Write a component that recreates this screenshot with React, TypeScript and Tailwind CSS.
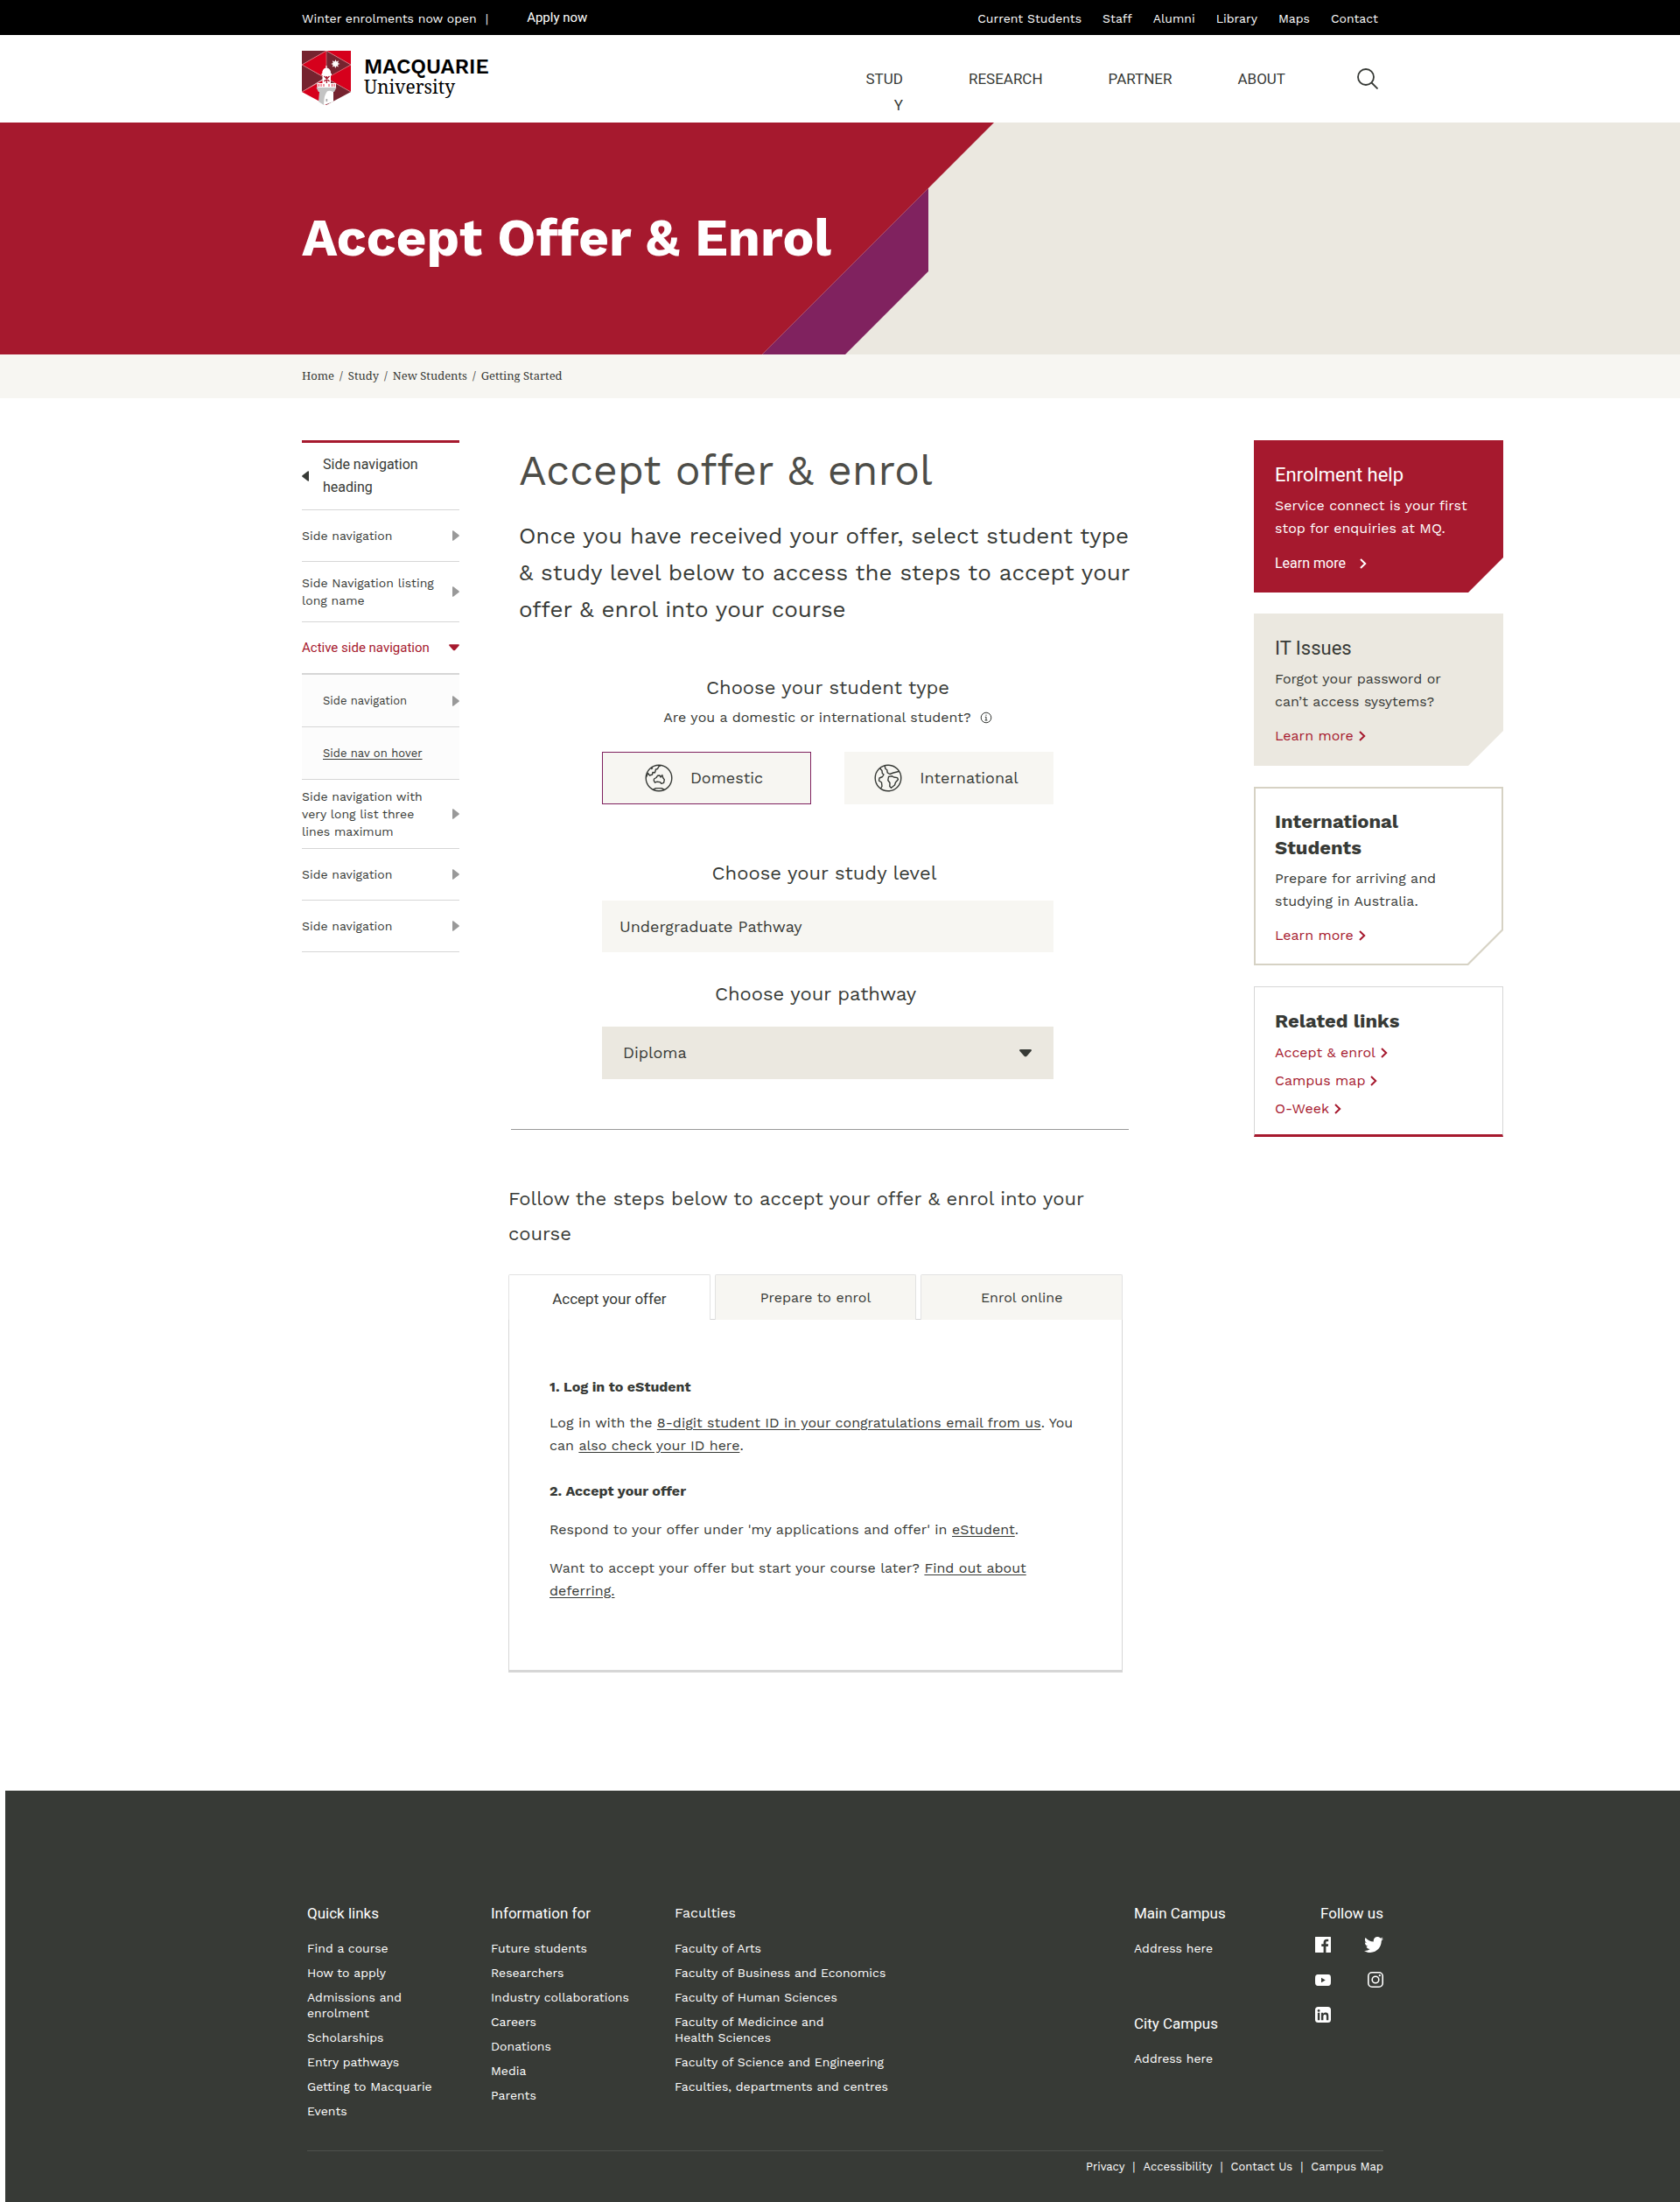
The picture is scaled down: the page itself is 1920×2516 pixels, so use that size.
import { useState, type ReactNode } from 'react'

const INK = 'text-[#373a36]'

function Crest() {
  return (
    <svg viewBox="0 0 56 62" className="h-[62px] w-14" aria-hidden="true">
      <path d="M0 0H28L0 16Z" fill="#76232f" />
      <path d="M28 0L0 16L28 32Z" fill="#d6001c" />
      <path d="M0 16L26 31L0 47Z" fill="#76232f" />
      <path d="M0 47L28 31V62Z" fill="#d6001c" />
      <path d="M28 0L56 16L28 32Z" fill="#76232f" />
      <path d="M28 0H56V16Z" fill="#d6001c" />
      <path d="M56 16V47L28 31Z" fill="#d6001c" />
      <path d="M56 47L28 31V62Z" fill="#76232f" />
      <path d="M28 0L0 16L56 47M28 0L56 16L0 47M28 0V18" fill="none" stroke="#e9a7a9" strokeWidth=".5" />
      <path d="M38.5 10L39.6 12.6L42 11.3L41.2 14L43.4 15L41 16L41.8 18.6L39.4 17.4L38.3 20L37.3 17.4L34.8 18.6L35.7 16L33.3 15L35.7 14L34.9 11.3L37.4 12.6Z" fill="#fff" />
      <path d="M27.4 17H28.6V19.6C31.6 20.2 33.2 22.6 33.2 26H34V28H22.5V26H23.2C23.2 22.6 24.6 20.2 27.4 19.6Z" fill="#fff" />
      <path d="M23.5 28H33V37H23.5Z" fill="#fff" />
      <path d="M25.5 29L31.5 35M31.5 29L25.5 35M28.4 29V31M28.4 33V37" stroke="#a6192e" strokeWidth="1.3" />
      <path d="M17.5 37H39V42H17.5Z" fill="#fff" />
      <path d="M19.5 38V41M22 38V41M25 38V41M31 38V41M34.5 38V41M37 38V41" stroke="#d6001c" strokeWidth=".8" />
      <path d="M16.5 42H39.5L37 47H36V58L25 62L19 58L20 47H19Z" fill="#c4c4c4" />
      <path d="M28 48C29 45.5 31 45 36 47V58L25 62C25.5 57 25.2 52 28 48Z" fill="#fff" />
      <path d="M27.5 55H29.2V58H27.5Z" fill="#a8a8a8" />
    </svg>
  )
}

function SearchIcon() {
  return (
    <svg viewBox="0 0 24 24" className="size-6" fill="none" stroke="#373a36" strokeWidth="1.8" aria-hidden="true">
      <circle cx="10" cy="10" r="9" />
      <path d="M16.5 16.5L23.5 23.5" />
    </svg>
  )
}

function Chevron() {
  return (
    <svg viewBox="0 0 8 12" className="h-3 w-2" fill="none" stroke="currentColor" strokeWidth="2" aria-hidden="true">
      <path d="M1 1L6.2 6L1 11" />
    </svg>
  )
}

function TriangleRight({ className = '' }: { className?: string }) {
  return (
    <svg viewBox="0 0 8 12" className={'h-3 w-2 shrink-0 ' + className} fill="currentColor" aria-hidden="true">
      <path d="M0 .8Q.1-.2 1 .3L7.5 5.2Q8.2 6 7.5 6.8L1 11.7Q.1 12.2 0 11.2Z" />
    </svg>
  )
}

function TriangleDown({ className = '' }: { className?: string }) {
  return (
    <svg viewBox="0 0 16 10" className={className} fill="currentColor" aria-hidden="true">
      <path d="M1.4 0H14.6Q16.6 .5 15.5 2L9.6 8.6Q8 10 6.4 8.6L.5 2Q-.6 .5 1.4 0Z" />
    </svg>
  )
}

function AustraliaGlobe() {
  return (
    <svg viewBox="0 0 32 32" className="size-8" fill="none" stroke="#373a36" strokeWidth="1.4" strokeLinejoin="round" aria-hidden="true">
      <circle cx="16" cy="16" r="14.8" />
      <path d="M1.5 15L3.5 10.5L5.5 13L8.5 12L9 9.5L11.5 9.8L12.5 6L14.5 5.5L16 2.6L18 1.8M7 5.5L9 4.5" />
      <path d="M10.5 17L13 15.5L14.5 13.3L17 13L18 15L19.8 12.6L20.6 15.5L22.3 17.8L21.6 21.4L19 22.4L17.3 20.6L14 20.2L11.5 21.2L10.3 19Z" />
      <path d="M9.5 29.2L12.5 27.6L19 27.6L22 29.2" />
    </svg>
  )
}

function WorldGlobe() {
  return (
    <svg viewBox="0 0 32 32" className="size-8" fill="none" stroke="#373a36" strokeWidth="1.4" strokeLinejoin="round" aria-hidden="true">
      <circle cx="16" cy="16" r="14.8" />
      <path d="M6.5 4.8L9 7.5L9.3 10.5L11 12L9.5 14.5L6 16L5.5 19L8.5 21L9 25.5L7.5 28" />
      <path d="M12 1.8L13 5.5L14.8 6.8L15.2 9.8L18 11.5L22 10L29 8.3" />
      <path d="M16.5 14.5L20.5 13.8L22.5 15L26.5 15.6L27.5 17.5L24.5 21L23.5 24L19.5 27.2L17.8 25.6L18 21.5L15.8 18.5Z" />
    </svg>
  )
}

const utilityLinks = ['Current Students', 'Staff', 'Alumni', 'Library', 'Maps', 'Contact']

function TopBar() {
  return (
    <div className="h-10 bg-black text-sm text-white">
      <div className="mx-auto flex h-full max-w-[1230px] items-center justify-between pt-0.5">
        <div className="flex items-center">
          <span>Winter enrolments now open</span>
          <span className="ml-2.5">|</span>
          <a href="#apply" className="ml-11 font-[Roboto] text-[15px]">Apply now</a>
        </div>
        <nav aria-label="Utility" className="flex gap-6">
          {utilityLinks.map((l) => (
            <a key={l} href="#top">{l}</a>
          ))}
        </nav>
      </div>
    </div>
  )
}

function Header() {
  return (
    <header className="h-[100px] bg-white">
      <div className="mx-auto flex max-w-[1230px] items-start justify-between">
        <a href="#home" className="mt-[18px] flex gap-[15px] text-black">
          <Crest />
          <span className="flex flex-col pt-1.5">
            <span className="text-2xl leading-6 font-semibold">MACQUARIE</span>
            <span className="font-['Noto_Serif','Liberation_Serif',serif] text-[21px] leading-[22px]">University</span>
          </span>
        </a>
        <div className={'mt-[35px] flex items-start gap-[82px] font-[Roboto] text-[17px] leading-[30px] ' + INK}>
          <nav aria-label="Main" className="flex items-start gap-[75px]">
            <a href="#study" className="w-12 text-right break-all">STUDY</a>
            <a href="#research">RESEARCH</a>
            <a href="#partner">PARTNER</a>
            <a href="#about">ABOUT</a>
          </nav>
          <button type="button" aria-label="Search" className="mt-[3px]">
            <SearchIcon />
          </button>
        </div>
      </div>
    </header>
  )
}

function Hero() {
  return (
    <div className="relative h-[265px] bg-[#ebe8e0]">
      <div className="absolute inset-y-0 left-0 w-[1061px] bg-[#80225f] [clip-path:polygon(100%_75px,100%_170px,966px_100%,871px_100%)]" />
      <div className="absolute inset-y-0 left-0 w-[1136px] bg-[#a6192e] [clip-path:polygon(0_0,100%_0,871px_100%,0_100%)]" />
      <div className="relative mx-auto flex h-full max-w-[1230px] items-center pb-0.5">
        <h1 className="text-[60px] leading-[72px] font-bold text-white">Accept Offer &amp; Enrol</h1>
      </div>
    </div>
  )
}

function Breadcrumbs() {
  const crumbs = ['Home', 'Study', 'New Students', 'Getting Started']
  return (
    <nav aria-label="Breadcrumb" className="bg-[#f7f6f2]">
      <ol className={"mx-auto flex h-[50px] max-w-[1230px] items-center font-['Noto_Serif','Liberation_Serif',serif] text-[13px] " + INK}>
        {crumbs.map((c, i) => (
          <li key={c} className="flex">
            {i > 0 && <span className="mx-1.5">/</span>}
            <a href="#top">{c}</a>
          </li>
        ))}
      </ol>
    </nav>
  )
}

function SideItem({ children, height }: { children: ReactNode; height: string }) {
  return (
    <li className={'flex border-b border-[#d6d6d6] ' + height}>
      <a href="#side" className="flex flex-1 items-center justify-between gap-4">
        <span>{children}</span>
        <TriangleRight className="text-[#999]" />
      </a>
    </li>
  )
}

function SideNav() {
  return (
    <nav aria-label="Section" className={'mt-12 w-[180px] shrink-0 border-t-[3px] border-[#a6192e] text-sm leading-5 ' + INK}>
      <ul>
        <li className="flex h-[77px] border-b border-[#d6d6d6]">
          <a href="#side" className="flex items-center gap-4 font-[Roboto] text-base leading-[26px]">
            <TriangleRight className="rotate-180" />
            <span className="pr-8">Side navigation heading</span>
          </a>
        </li>
        <SideItem height="h-[59px]">Side navigation</SideItem>
        <SideItem height="h-[69px]">Side Navigation listing long name</SideItem>
        <li>
          <a href="#side" aria-current="page" className="flex h-[60px] items-center justify-between border-b-2 border-[#d6d6d6] text-[#a6192e]">
            <span className="font-[Roboto] text-[15px] whitespace-nowrap">Active side navigation</span>
            <TriangleDown className="h-2 w-3 shrink-0" />
          </a>
          <ul className="bg-[#fcfcfc] text-[13px]">
            <li className="h-[60px] border-b border-[#d6d6d6] pl-6">
              <a href="#side" className="flex h-full items-center justify-between">
                Side navigation
                <TriangleRight className="text-[#999]" />
              </a>
            </li>
            <li className="h-[60px] border-b border-[#d6d6d6] pl-6">
              <a href="#side" className="flex h-full items-center underline underline-offset-2">Side nav on hover</a>
            </li>
          </ul>
        </li>
        <SideItem height="h-[79px]">Side navigation with very long list three lines maximum</SideItem>
        <SideItem height="h-[59px]">Side navigation</SideItem>
        <SideItem height="h-[59px]">Side navigation</SideItem>
      </ul>
    </nav>
  )
}

function StudentTypeButton({ label, icon, active, onClick }: { label: string; icon: ReactNode; active: boolean; onClick: () => void }) {
  return (
    <button
      type="button"
      aria-pressed={active}
      onClick={onClick}
      className={'flex h-[60px] w-[239px] items-center justify-center gap-5 border bg-[#f7f6f2] pr-1.5 text-lg ' + (active ? 'border-[#80225f]' : 'border-[#f7f6f2]')}
    >
      {icon}
      {label}
    </button>
  )
}

function OfferForm() {
  const [type, setType] = useState('Domestic')
  const heading = 'text-center text-[22px] leading-[30px]'
  return (
    <form className="mt-[54px] ml-[107px] flex max-w-[516px] flex-col">
      <h3 className={heading}>Choose your student type</h3>
      <p className="mt-1.5 flex items-center justify-center gap-2.5 leading-[26px]">
        Are you a domestic or international student?
        <svg viewBox="0 0 14 14" className="size-3.5" fill="none" stroke="currentColor" aria-hidden="true">
          <circle cx="7" cy="7" r="5.8" />
          <path d="M7 6V10M5.8 6.3H7M5.6 10H8.4M7 3.6V4.8" />
        </svg>
      </p>
      <div className="mt-[26px] flex justify-between">
        <StudentTypeButton label="Domestic" icon={<AustraliaGlobe />} active={type === 'Domestic'} onClick={() => setType('Domestic')} />
        <StudentTypeButton label="International" icon={<WorldGlobe />} active={type === 'International'} onClick={() => setType('International')} />
      </div>
      <label htmlFor="level" className={'mt-16 pr-2 ' + heading}>Choose your study level</label>
      <input id="level" defaultValue="Undergraduate Pathway" className="mt-4 h-[59px] w-full bg-[#f7f6f2] px-5 text-lg" />
      <label htmlFor="pathway" className={'mt-[33px] pr-7 ' + heading}>Choose your pathway</label>
      <div className="relative mt-[22px]">
        <select id="pathway" className="h-[60px] w-full appearance-none bg-[#ebe8e0] px-6 text-lg">
          <option>Diploma</option>
        </select>
        <TriangleDown className="pointer-events-none absolute top-[26px] right-6 h-[9px] w-4" />
      </div>
    </form>
  )
}

const tabs = ['Accept your offer', 'Prepare to enrol', 'Enrol online']

function Steps() {
  const [tab, setTab] = useState(0)
  const link = 'underline underline-offset-2'
  return (
    <section className="mt-[26px] w-full max-w-[702px]">
      <div role="tablist" className="flex h-[52px] gap-[5px] shadow-[inset_0_-1px_0_#d6d6d6]">
        {tabs.map((t, i) => (
          <button
            key={t}
            type="button"
            role="tab"
            aria-selected={tab === i}
            onClick={() => setTab(i)}
            className={'flex-1 rounded-t-xs border border-b-0 border-[#e2e2e2] ' + (tab === i ? 'bg-white pt-1 font-[Roboto] text-[17px]' : 'bg-[#f7f6f2]')}
          >
            {t}
          </button>
        ))}
      </div>
      <div role="tabpanel" className="border-x border-b-[3px] border-[#d6d6d6] pt-16 pr-[46px] pb-[77px] pl-[46px] leading-[26px]">
        <h4 className="font-bold">1. Log in to eStudent</h4>
        <p className="mt-[15px]">
          Log in with the <a href="#id" className={link}>8-digit student ID in your congratulations email from us</a>. You<br />
          can <a href="#check" className={link}>also check your ID here</a>.
        </p>
        <h4 className="mt-[26px] font-bold">2. Accept your offer</h4>
        <p className="mt-[18px]">
          Respond to your offer under 'my applications and offer' in <a href="#estudent" className={link}>eStudent</a>.
        </p>
        <p className="mt-[18px]">
          Want to accept your offer but start your course later? <a href="#defer" className={link}>Find out about<br />deferring.</a>
        </p>
      </div>
    </section>
  )
}

function LearnMore({ children, className = '' }: { children: ReactNode; className?: string }) {
  return (
    <a href="#more" className={'flex items-center gap-1.5 leading-[26px] ' + className}>
      {children}
      <Chevron />
    </a>
  )
}

const NOTCH = '[clip-path:polygon(0_0,100%_0,100%_calc(100%-40px),calc(100%-40px)_100%,0_100%)]'
const NOTCH_INNER = '[clip-path:polygon(0_0,100%_0,100%_calc(100%-39px),calc(100%-39px)_100%,0_100%)]'

function Cards() {
  return (
    <aside className="mt-12 ml-auto flex w-[285px] shrink-0 flex-col gap-6">
      <section className={'h-[174px] bg-[#a6192e] px-6 pt-[25px] text-white ' + NOTCH}>
        <h3 className="font-[Roboto] text-[22px] leading-[30px]">Enrolment help</h3>
        <p className="mt-[7px] leading-[26px]">Service connect is your first<br />stop for enquiries at MQ.</p>
        <a href="#more" className="mt-3.5 flex items-center gap-4 font-[Roboto] text-base leading-[26px]">
          Learn more
          <Chevron />
        </a>
      </section>
      <section className={'h-[174px] bg-[#ebe8e0] px-6 pt-[25px] ' + NOTCH}>
        <h3 className="font-[Roboto] text-[22px] leading-[30px]">IT Issues</h3>
        <p className="mt-[7px] leading-[26px]">Forgot your password or<br />can’t access sysytems?</p>
        <LearnMore className="mt-[13px] text-[#a6192e]">Learn more</LearnMore>
      </section>
      <section className={'h-[204px] bg-[#d6d2c4] p-0.5 ' + NOTCH}>
        <div className={'h-full bg-white px-[22px] pt-[23px] ' + NOTCH_INNER}>
          <h3 className="text-[22px] leading-[30px] font-bold">International<br />Students</h3>
          <p className="mt-[7px] leading-[26px]">Prepare for arriving and<br />studying in Australia.</p>
          <LearnMore className="mt-[13px] text-[#a6192e]">Learn more</LearnMore>
        </div>
      </section>
      <section className="h-[172px] border border-b-[3px] border-[#d6d6d6] border-b-[#a6192e] px-[23px] pt-6">
        <h3 className="text-[22px] leading-[30px] font-bold">Related links</h3>
        <ul className="mt-2 flex flex-col gap-1.5 text-[#a6192e]">
          <li><LearnMore>Accept &amp; enrol</LearnMore></li>
          <li><LearnMore>Campus map</LearnMore></li>
          <li><LearnMore>O-Week</LearnMore></li>
        </ul>
      </section>
    </aside>
  )
}

function FooterList({ title, items, titleClass = 'font-[Roboto] text-[17px]' }: { title: string; items: ReactNode[]; titleClass?: string }) {
  return (
    <div>
      <h4 className={'leading-6 ' + titleClass}>{title}</h4>
      <ul className="mt-[19px] flex flex-col gap-2.5">
        {items.map((item, i) => (
          <li key={i}><a href="#footer">{item}</a></li>
        ))}
      </ul>
    </div>
  )
}

function SocialLinks() {
  return (
    <div className="mt-[15px] ml-auto grid w-[78px] auto-rows-[18px] grid-cols-2 gap-y-[22px]">
      <a href="#facebook" aria-label="Facebook">
        <svg viewBox="0 0 24 24" className="size-[18px]" fill="#fff">
          <path d="M23.4 0H.6Q0 0 0 .6V23.4Q0 24 .6 24H12.818V14.706H9.689V11.085H12.818V8.41C12.818 5.311 14.712 3.625 17.477 3.625C18.802 3.625 19.941 3.722 20.273 3.766V7.006H18.352C16.852 7.006 16.56 7.727 16.56 8.777V11.088H20.144L19.679 14.718H16.56V24H23.4Q24 24 24 23.4V.6Q24 0 23.4 0Z" />
        </svg>
      </a>
      <a href="#twitter" aria-label="Twitter" className="flex justify-end">
        <svg viewBox="0 48 512 416" className="h-[18px] w-[22px]" fill="#fff">
          <path d="M459.37 151.716c.325 4.548.325 9.097.325 13.645 0 138.72-105.583 298.558-298.558 298.558-59.452 0-114.68-17.219-161.137-47.106 8.447.974 16.568 1.299 25.34 1.299 49.055 0 94.213-16.568 130.274-44.832-46.132-.975-84.792-31.188-98.112-72.772 6.498.974 12.995 1.624 19.818 1.624 9.421 0 18.843-1.3 27.614-3.573-48.081-9.747-84.143-51.98-84.143-102.985v-1.299c13.969 7.797 30.214 12.67 47.431 13.319-28.264-18.843-46.781-51.005-46.781-87.391 0-19.492 5.197-37.36 14.294-52.954 51.655 63.675 129.3 105.258 216.365 109.807-1.624-7.797-2.599-15.918-2.599-24.04 0-57.828 46.782-104.934 104.934-104.934 30.213 0 57.502 12.67 76.67 33.137 23.715-4.548 46.456-13.32 66.599-25.34-7.798 24.366-24.366 44.833-46.132 57.827 21.117-2.273 41.584-8.122 60.426-16.243-14.292 20.791-32.161 39.308-52.628 54.253z" />
        </svg>
      </a>
      <a href="#youtube" aria-label="YouTube" className="flex items-center">
        <svg viewBox="0 0 18 13" className="h-[13px] w-[18px]" fill="#fff" fillRule="evenodd">
          <path d="M3 0Q9-.3 15 .1Q17.8 .3 17.9 3Q18.1 6.500 17.9 10Q17.800 12.700 15 12.900Q9 13.200 3 12.900Q.2 12.700 .1 10Q-.1 6.500 .1 3Q.2 .3 3 0ZM7 3.700V9.200L11.800 6.450Z" />
        </svg>
      </a>
      <a href="#instagram" aria-label="Instagram" className="flex justify-end">
        <svg viewBox="0 0 18 18" className="size-[18px]" fill="none" stroke="#fff" strokeWidth="1.6">
          <rect x=".8" y=".8" width="16.400" height="16.400" rx="4.200" />
          <circle cx="9" cy="9" r="3.800" />
          <circle cx="13.800" cy="4.200" r="1.100" fill="#fff" stroke="none" />
        </svg>
      </a>
      <a href="#linkedin" aria-label="LinkedIn">
        <svg viewBox="0 0 18 18" className="size-[18px]">
          <rect width="18" height="18" rx="3.500" fill="#fff" />
          <g fill="#373a36">
            <circle cx="4.100" cy="4.400" r="1.400" />
            <path d="M2.900 6.800H5.300V15.200H2.900ZM7 6.800H9.300V8C10 6.900 11 6.500 12.100 6.500C14.600 6.500 15.300 8.200 15.300 10.300V15.200H12.900V10.900C12.900 9.700 12.700 8.700 11.300 8.700C9.900 8.700 9.400 9.700 9.400 10.900V15.200H7Z" />
          </g>
        </svg>
      </a>
    </div>
  )
}

function Footer() {
  const legal = ['Privacy', 'Accessibility', 'Contact Us', 'Campus Map']
  return (
    <footer className="mt-[135px] -mr-1.5 ml-1.5 bg-[#373a36] pt-32 pb-8 text-sm leading-[18px] text-white">
      <div className="mx-auto max-w-[1230px]">
        <div className="grid grid-cols-[210px_210px_525px_1fr_auto] pb-9">
          <FooterList
            title="Quick links"
            items={['Find a course', 'How to apply', <>Admissions and<br />enrolment</>, 'Scholarships', 'Entry pathways', 'Getting to Macquarie', 'Events']}
          />
          <FooterList
            title="Information for"
            items={['Future students', 'Researchers', 'Industry collaborations', 'Careers', 'Donations', 'Media', 'Parents']}
          />
          <FooterList
            title="Faculties"
            titleClass="text-base"
            items={[
              'Faculty of Arts',
              'Faculty of Business and Economics',
              'Faculty of Human Sciences',
              <>Faculty of Medicince and<br />Health Sciences</>,
              'Faculty of Science and Engineering',
              'Faculties, departments and centres',
            ]}
          />
          <div className="flex flex-col gap-[65px]">
            <FooterList title="Main Campus" items={['Address here']} />
            <FooterList title="City Campus" items={['Address here']} />
          </div>
          <div className="text-right">
            <h4 className="font-[Roboto] text-[17px] leading-6">Follow us</h4>
            <SocialLinks />
          </div>
        </div>
        <ul className="flex justify-end border-t border-[#4d504c] pt-2 text-[13px] leading-5">
          {legal.map((l, i) => (
            <li key={l} className="flex">
              {i > 0 && <span className="mx-[9px]">|</span>}
              <a href="#legal">{l}</a>
            </li>
          ))}
        </ul>
      </div>
    </footer>
  )
}

export default function App() {
  return (
    <div className={"overflow-x-hidden bg-white font-['Work_Sans','Inter',sans-serif] " + INK}>
      <TopBar />
      <Header />
      <Hero />
      <Breadcrumbs />
      <div className="flex pr-[202px] pl-[345px]">
        <SideNav />
        <main className="ml-14 max-w-[720px] flex-1 pt-[55px]">
          <h2 className="pl-3 text-5xl leading-14 text-[#4d4d48]">Accept offer &amp; enrol</h2>
          <p className="mt-[25px] pl-3 text-[26px] leading-[42px] whitespace-nowrap">
            Once you have received your offer, select student type<br />
            &amp; study level below to access the steps to accept your<br />
            offer &amp; enrol into your course
          </p>
          <OfferForm />
          <hr className="mt-[57px] ml-[3px] max-w-[706px] border-[#999]" />
          <p className="mt-[59px] text-[22px] leading-10">
            Follow the steps below to accept your offer &amp; enrol into your<br />course
          </p>
          <Steps />
        </main>
        <Cards />
      </div>
      <Footer />
    </div>
  )
}
